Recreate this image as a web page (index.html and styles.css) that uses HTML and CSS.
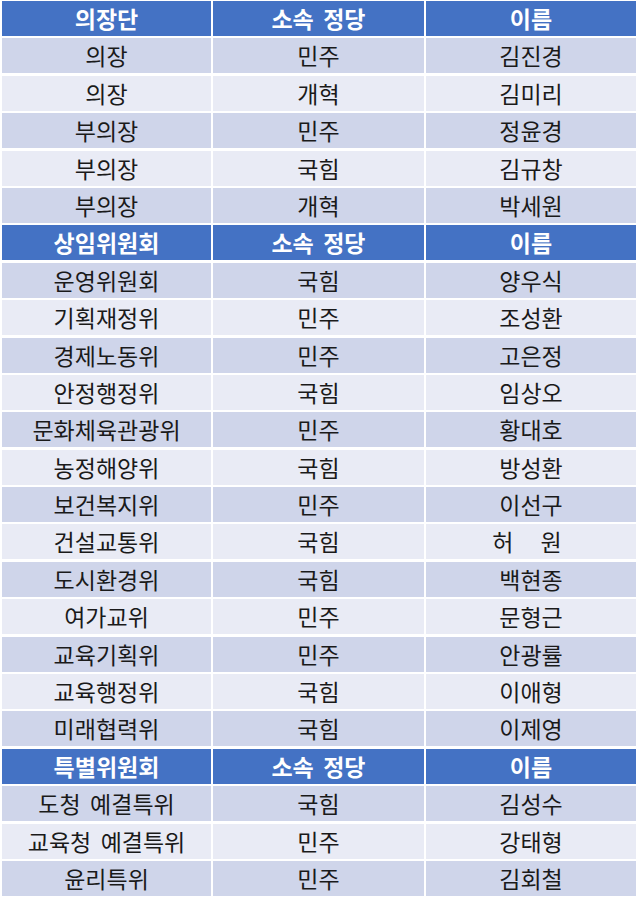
FILE: index.html
```html
<!DOCTYPE html>
<html lang="ko">
<head>
<meta charset="utf-8">
<link rel="stylesheet" href="styles.css">
</head>
<body>
<div class="table">
  <div class="cell head">의장단</div><div class="cell head">소속 정당</div><div class="cell head">이름</div>
  <div class="cell odd">의장</div><div class="cell odd">민주</div><div class="cell odd">김진경</div>
  <div class="cell even">의장</div><div class="cell even">개혁</div><div class="cell even">김미리</div>
  <div class="cell odd">부의장</div><div class="cell odd">민주</div><div class="cell odd">정윤경</div>
  <div class="cell even">부의장</div><div class="cell even">국힘</div><div class="cell even">김규창</div>
  <div class="cell odd">부의장</div><div class="cell odd">개혁</div><div class="cell odd">박세원</div>
  <div class="cell head">상임위원회</div><div class="cell head">소속 정당</div><div class="cell head">이름</div>
  <div class="cell odd">운영위원회</div><div class="cell odd">국힘</div><div class="cell odd">양우식</div>
  <div class="cell even">기획재정위</div><div class="cell even">민주</div><div class="cell even">조성환</div>
  <div class="cell odd">경제노동위</div><div class="cell odd">민주</div><div class="cell odd">고은정</div>
  <div class="cell even">안정행정위</div><div class="cell even">국힘</div><div class="cell even">임상오</div>
  <div class="cell odd">문화체육관광위</div><div class="cell odd">민주</div><div class="cell odd">황대호</div>
  <div class="cell even">농정해양위</div><div class="cell even">국힘</div><div class="cell even">방성환</div>
  <div class="cell odd">보건복지위</div><div class="cell odd">민주</div><div class="cell odd">이선구</div>
  <div class="cell even">건설교통위</div><div class="cell even">국힘</div><div class="cell even"><span class="wide"><span>허</span><span>원</span></span></div>
  <div class="cell odd">도시환경위</div><div class="cell odd">국힘</div><div class="cell odd">백현종</div>
  <div class="cell even">여가교위</div><div class="cell even">민주</div><div class="cell even">문형근</div>
  <div class="cell odd">교육기획위</div><div class="cell odd">민주</div><div class="cell odd">안광률</div>
  <div class="cell even">교육행정위</div><div class="cell even">국힘</div><div class="cell even">이애형</div>
  <div class="cell odd">미래협력위</div><div class="cell odd">국힘</div><div class="cell odd">이제영</div>
  <div class="cell head">특별위원회</div><div class="cell head">소속 정당</div><div class="cell head">이름</div>
  <div class="cell odd">도청 예결특위</div><div class="cell odd">국힘</div><div class="cell odd">김성수</div>
  <div class="cell even">교육청 예결특위</div><div class="cell even">민주</div><div class="cell even">강태형</div>
  <div class="cell odd">윤리특위</div><div class="cell odd">민주</div><div class="cell odd">김회철</div>
</div>
</body>
</html>
```

FILE: styles.css
```css
html, body {
  margin: 0;
  padding: 0;
  background: #ffffff;
}
body {
  font-family: "Noto Sans CJK KR", "Noto Sans", sans-serif;
}
.table {
  display: grid;
  grid-template-columns: 209px 211px 210px;
  grid-auto-rows: 35px;
  column-gap: 2px;
  row-gap: 2.4px;
  padding: 1px 0 0 2px;
  width: 634px;
}
.cell {
  display: flex;
  align-items: center;
  justify-content: center;
  font-size: 23px;
  line-height: 1;
  color: #1a1a1a;
  white-space: nowrap;
  word-spacing: 3px;
}
.head {
  background: #4472c4;
  color: #ffffff;
  font-weight: 700;
}
.odd {
  background: #cfd5ea;
}
.even {
  background: #e9ebf5;
}
.wide {
  display: inline-flex;
  gap: 27px;
  margin-right: 8px;
}
```
